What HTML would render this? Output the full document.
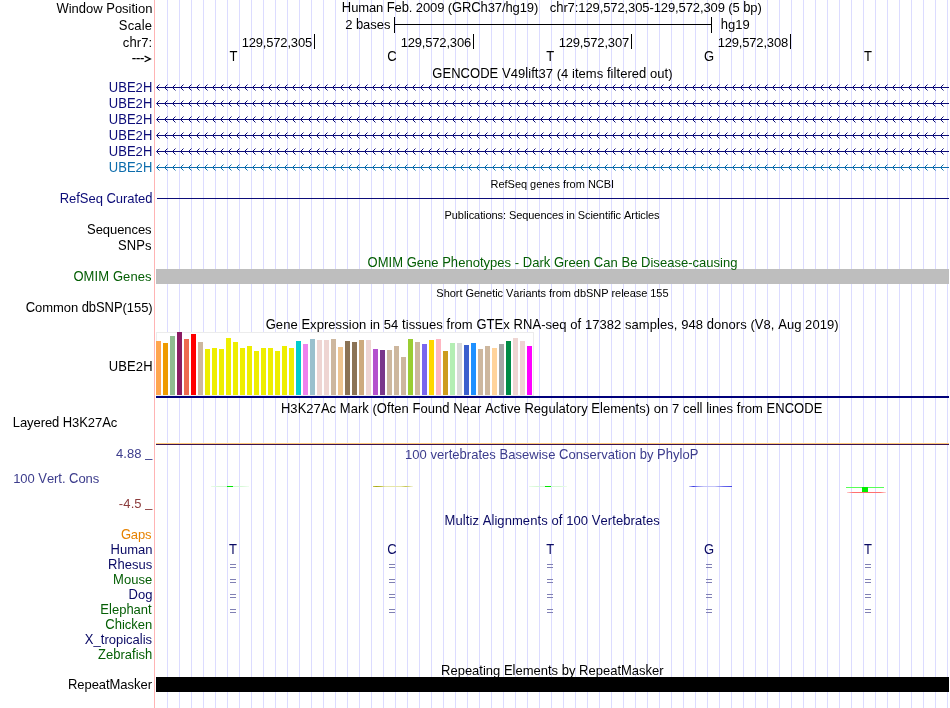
<!DOCTYPE html>
<html><head><meta charset="utf-8"><title>UCSC Genome Browser</title>
<style>
html,body{margin:0;padding:0;background:#fff}
body{width:950px;height:708px;overflow:hidden;position:relative;font-family:"Liberation Sans", sans-serif}
#g{position:absolute;left:0;top:0}
#t{position:absolute;left:0;top:0;width:950px;height:708px;will-change:transform}
#t span{position:absolute;white-space:pre}
#t b{display:inline-block;font-weight:normal;transform:scaleY(1.06);transform-origin:0 13px}
#t .s b{transform-origin:0 11.5px}
#bar{position:absolute;left:156px;top:677px;width:793px;height:15px;background:#000}
</style></head><body>
<svg id="g" width="950" height="708" viewBox="0 0 950 708">
<path d="M167.5 0V708M179.5 0V708M191.5 0V708M203.5 0V708M215.5 0V708M227.5 0V708M239.5 0V708M251.5 0V708M263.5 0V708M275.5 0V708M287.5 0V708M299.5 0V708M311.5 0V708M323.5 0V708M335.5 0V708M347.5 0V708M359.5 0V708M371.5 0V708M383.5 0V708M395.5 0V708M407.5 0V708M419.5 0V708M431.5 0V708M443.5 0V708M455.5 0V708M467.5 0V708M479.5 0V708M491.5 0V708M503.5 0V708M515.5 0V708M527.5 0V708M539.5 0V708M551.5 0V708M563.5 0V708M575.5 0V708M587.5 0V708M599.5 0V708M611.5 0V708M623.5 0V708M635.5 0V708M647.5 0V708M659.5 0V708M671.5 0V708M683.5 0V708M695.5 0V708M707.5 0V708M719.5 0V708M731.5 0V708M743.5 0V708M755.5 0V708M767.5 0V708M779.5 0V708M791.5 0V708M803.5 0V708M815.5 0V708M827.5 0V708M839.5 0V708M851.5 0V708M863.5 0V708M875.5 0V708M887.5 0V708M899.5 0V708M911.5 0V708M923.5 0V708M935.5 0V708M947.5 0V708" stroke="#dcdcff" stroke-width="1" fill="none"/>
<rect x="154" y="0" width="1" height="708" fill="#ffb4b4"/>
<rect x="394" y="24" width="318" height="1" fill="#000"/>
<rect x="394" y="17" width="1" height="16" fill="#000"/>
<rect x="711" y="17" width="1" height="16" fill="#000"/>
<path d="M132.3 58.5h3.4M136.4 58.5h3.4M140.5 58.5h3.3" stroke="#000" stroke-width="1.25"/><path d="M144.6 56.1L150.4 58.9L144.6 61.8" stroke="#000" stroke-width="1.25" fill="none"/>
<rect x="314" y="34" width="1" height="15" fill="#000"/>
<rect x="473" y="34" width="1" height="15" fill="#000"/>
<rect x="631" y="34" width="1" height="15" fill="#000"/>
<rect x="790" y="34" width="1" height="15" fill="#000"/>
<rect x="157" y="87" width="792" height="1" fill="#0c0c78"/>
<path d="M159.5 84.5L156.5 87.5L159.5 90.5M167.5 84.5L164.5 87.5L167.5 90.5M175.5 84.5L172.5 87.5L175.5 90.5M183.5 84.5L180.5 87.5L183.5 90.5M191.5 84.5L188.5 87.5L191.5 90.5M199.5 84.5L196.5 87.5L199.5 90.5M207.5 84.5L204.5 87.5L207.5 90.5M215.5 84.5L212.5 87.5L215.5 90.5M223.5 84.5L220.5 87.5L223.5 90.5M231.5 84.5L228.5 87.5L231.5 90.5M239.5 84.5L236.5 87.5L239.5 90.5M247.5 84.5L244.5 87.5L247.5 90.5M255.5 84.5L252.5 87.5L255.5 90.5M263.5 84.5L260.5 87.5L263.5 90.5M271.5 84.5L268.5 87.5L271.5 90.5M279.5 84.5L276.5 87.5L279.5 90.5M287.5 84.5L284.5 87.5L287.5 90.5M295.5 84.5L292.5 87.5L295.5 90.5M303.5 84.5L300.5 87.5L303.5 90.5M311.5 84.5L308.5 87.5L311.5 90.5M319.5 84.5L316.5 87.5L319.5 90.5M327.5 84.5L324.5 87.5L327.5 90.5M335.5 84.5L332.5 87.5L335.5 90.5M343.5 84.5L340.5 87.5L343.5 90.5M351.5 84.5L348.5 87.5L351.5 90.5M359.5 84.5L356.5 87.5L359.5 90.5M367.5 84.5L364.5 87.5L367.5 90.5M375.5 84.5L372.5 87.5L375.5 90.5M383.5 84.5L380.5 87.5L383.5 90.5M391.5 84.5L388.5 87.5L391.5 90.5M399.5 84.5L396.5 87.5L399.5 90.5M407.5 84.5L404.5 87.5L407.5 90.5M415.5 84.5L412.5 87.5L415.5 90.5M423.5 84.5L420.5 87.5L423.5 90.5M431.5 84.5L428.5 87.5L431.5 90.5M439.5 84.5L436.5 87.5L439.5 90.5M447.5 84.5L444.5 87.5L447.5 90.5M455.5 84.5L452.5 87.5L455.5 90.5M463.5 84.5L460.5 87.5L463.5 90.5M471.5 84.5L468.5 87.5L471.5 90.5M479.5 84.5L476.5 87.5L479.5 90.5M487.5 84.5L484.5 87.5L487.5 90.5M495.5 84.5L492.5 87.5L495.5 90.5M503.5 84.5L500.5 87.5L503.5 90.5M511.5 84.5L508.5 87.5L511.5 90.5M519.5 84.5L516.5 87.5L519.5 90.5M527.5 84.5L524.5 87.5L527.5 90.5M535.5 84.5L532.5 87.5L535.5 90.5M543.5 84.5L540.5 87.5L543.5 90.5M551.5 84.5L548.5 87.5L551.5 90.5M559.5 84.5L556.5 87.5L559.5 90.5M567.5 84.5L564.5 87.5L567.5 90.5M575.5 84.5L572.5 87.5L575.5 90.5M583.5 84.5L580.5 87.5L583.5 90.5M591.5 84.5L588.5 87.5L591.5 90.5M599.5 84.5L596.5 87.5L599.5 90.5M607.5 84.5L604.5 87.5L607.5 90.5M615.5 84.5L612.5 87.5L615.5 90.5M623.5 84.5L620.5 87.5L623.5 90.5M631.5 84.5L628.5 87.5L631.5 90.5M639.5 84.5L636.5 87.5L639.5 90.5M647.5 84.5L644.5 87.5L647.5 90.5M655.5 84.5L652.5 87.5L655.5 90.5M663.5 84.5L660.5 87.5L663.5 90.5M671.5 84.5L668.5 87.5L671.5 90.5M679.5 84.5L676.5 87.5L679.5 90.5M687.5 84.5L684.5 87.5L687.5 90.5M695.5 84.5L692.5 87.5L695.5 90.5M703.5 84.5L700.5 87.5L703.5 90.5M711.5 84.5L708.5 87.5L711.5 90.5M719.5 84.5L716.5 87.5L719.5 90.5M727.5 84.5L724.5 87.5L727.5 90.5M735.5 84.5L732.5 87.5L735.5 90.5M743.5 84.5L740.5 87.5L743.5 90.5M751.5 84.5L748.5 87.5L751.5 90.5M759.5 84.5L756.5 87.5L759.5 90.5M767.5 84.5L764.5 87.5L767.5 90.5M775.5 84.5L772.5 87.5L775.5 90.5M783.5 84.5L780.5 87.5L783.5 90.5M791.5 84.5L788.5 87.5L791.5 90.5M799.5 84.5L796.5 87.5L799.5 90.5M807.5 84.5L804.5 87.5L807.5 90.5M815.5 84.5L812.5 87.5L815.5 90.5M823.5 84.5L820.5 87.5L823.5 90.5M831.5 84.5L828.5 87.5L831.5 90.5M839.5 84.5L836.5 87.5L839.5 90.5M847.5 84.5L844.5 87.5L847.5 90.5M855.5 84.5L852.5 87.5L855.5 90.5M863.5 84.5L860.5 87.5L863.5 90.5M871.5 84.5L868.5 87.5L871.5 90.5M879.5 84.5L876.5 87.5L879.5 90.5M887.5 84.5L884.5 87.5L887.5 90.5M895.5 84.5L892.5 87.5L895.5 90.5M903.5 84.5L900.5 87.5L903.5 90.5M911.5 84.5L908.5 87.5L911.5 90.5M919.5 84.5L916.5 87.5L919.5 90.5M927.5 84.5L924.5 87.5L927.5 90.5M935.5 84.5L932.5 87.5L935.5 90.5M943.5 84.5L940.5 87.5L943.5 90.5" stroke="#0c0c78" stroke-width="1" fill="none"/>
<rect x="157" y="103" width="792" height="1" fill="#0c0c78"/>
<path d="M159.5 100.5L156.5 103.5L159.5 106.5M167.5 100.5L164.5 103.5L167.5 106.5M175.5 100.5L172.5 103.5L175.5 106.5M183.5 100.5L180.5 103.5L183.5 106.5M191.5 100.5L188.5 103.5L191.5 106.5M199.5 100.5L196.5 103.5L199.5 106.5M207.5 100.5L204.5 103.5L207.5 106.5M215.5 100.5L212.5 103.5L215.5 106.5M223.5 100.5L220.5 103.5L223.5 106.5M231.5 100.5L228.5 103.5L231.5 106.5M239.5 100.5L236.5 103.5L239.5 106.5M247.5 100.5L244.5 103.5L247.5 106.5M255.5 100.5L252.5 103.5L255.5 106.5M263.5 100.5L260.5 103.5L263.5 106.5M271.5 100.5L268.5 103.5L271.5 106.5M279.5 100.5L276.5 103.5L279.5 106.5M287.5 100.5L284.5 103.5L287.5 106.5M295.5 100.5L292.5 103.5L295.5 106.5M303.5 100.5L300.5 103.5L303.5 106.5M311.5 100.5L308.5 103.5L311.5 106.5M319.5 100.5L316.5 103.5L319.5 106.5M327.5 100.5L324.5 103.5L327.5 106.5M335.5 100.5L332.5 103.5L335.5 106.5M343.5 100.5L340.5 103.5L343.5 106.5M351.5 100.5L348.5 103.5L351.5 106.5M359.5 100.5L356.5 103.5L359.5 106.5M367.5 100.5L364.5 103.5L367.5 106.5M375.5 100.5L372.5 103.5L375.5 106.5M383.5 100.5L380.5 103.5L383.5 106.5M391.5 100.5L388.5 103.5L391.5 106.5M399.5 100.5L396.5 103.5L399.5 106.5M407.5 100.5L404.5 103.5L407.5 106.5M415.5 100.5L412.5 103.5L415.5 106.5M423.5 100.5L420.5 103.5L423.5 106.5M431.5 100.5L428.5 103.5L431.5 106.5M439.5 100.5L436.5 103.5L439.5 106.5M447.5 100.5L444.5 103.5L447.5 106.5M455.5 100.5L452.5 103.5L455.5 106.5M463.5 100.5L460.5 103.5L463.5 106.5M471.5 100.5L468.5 103.5L471.5 106.5M479.5 100.5L476.5 103.5L479.5 106.5M487.5 100.5L484.5 103.5L487.5 106.5M495.5 100.5L492.5 103.5L495.5 106.5M503.5 100.5L500.5 103.5L503.5 106.5M511.5 100.5L508.5 103.5L511.5 106.5M519.5 100.5L516.5 103.5L519.5 106.5M527.5 100.5L524.5 103.5L527.5 106.5M535.5 100.5L532.5 103.5L535.5 106.5M543.5 100.5L540.5 103.5L543.5 106.5M551.5 100.5L548.5 103.5L551.5 106.5M559.5 100.5L556.5 103.5L559.5 106.5M567.5 100.5L564.5 103.5L567.5 106.5M575.5 100.5L572.5 103.5L575.5 106.5M583.5 100.5L580.5 103.5L583.5 106.5M591.5 100.5L588.5 103.5L591.5 106.5M599.5 100.5L596.5 103.5L599.5 106.5M607.5 100.5L604.5 103.5L607.5 106.5M615.5 100.5L612.5 103.5L615.5 106.5M623.5 100.5L620.5 103.5L623.5 106.5M631.5 100.5L628.5 103.5L631.5 106.5M639.5 100.5L636.5 103.5L639.5 106.5M647.5 100.5L644.5 103.5L647.5 106.5M655.5 100.5L652.5 103.5L655.5 106.5M663.5 100.5L660.5 103.5L663.5 106.5M671.5 100.5L668.5 103.5L671.5 106.5M679.5 100.5L676.5 103.5L679.5 106.5M687.5 100.5L684.5 103.5L687.5 106.5M695.5 100.5L692.5 103.5L695.5 106.5M703.5 100.5L700.5 103.5L703.5 106.5M711.5 100.5L708.5 103.5L711.5 106.5M719.5 100.5L716.5 103.5L719.5 106.5M727.5 100.5L724.5 103.5L727.5 106.5M735.5 100.5L732.5 103.5L735.5 106.5M743.5 100.5L740.5 103.5L743.5 106.5M751.5 100.5L748.5 103.5L751.5 106.5M759.5 100.5L756.5 103.5L759.5 106.5M767.5 100.5L764.5 103.5L767.5 106.5M775.5 100.5L772.5 103.5L775.5 106.5M783.5 100.5L780.5 103.5L783.5 106.5M791.5 100.5L788.5 103.5L791.5 106.5M799.5 100.5L796.5 103.5L799.5 106.5M807.5 100.5L804.5 103.5L807.5 106.5M815.5 100.5L812.5 103.5L815.5 106.5M823.5 100.5L820.5 103.5L823.5 106.5M831.5 100.5L828.5 103.5L831.5 106.5M839.5 100.5L836.5 103.5L839.5 106.5M847.5 100.5L844.5 103.5L847.5 106.5M855.5 100.5L852.5 103.5L855.5 106.5M863.5 100.5L860.5 103.5L863.5 106.5M871.5 100.5L868.5 103.5L871.5 106.5M879.5 100.5L876.5 103.5L879.5 106.5M887.5 100.5L884.5 103.5L887.5 106.5M895.5 100.5L892.5 103.5L895.5 106.5M903.5 100.5L900.5 103.5L903.5 106.5M911.5 100.5L908.5 103.5L911.5 106.5M919.5 100.5L916.5 103.5L919.5 106.5M927.5 100.5L924.5 103.5L927.5 106.5M935.5 100.5L932.5 103.5L935.5 106.5M943.5 100.5L940.5 103.5L943.5 106.5" stroke="#0c0c78" stroke-width="1" fill="none"/>
<rect x="157" y="119" width="792" height="1" fill="#0c0c78"/>
<path d="M159.5 116.5L156.5 119.5L159.5 122.5M167.5 116.5L164.5 119.5L167.5 122.5M175.5 116.5L172.5 119.5L175.5 122.5M183.5 116.5L180.5 119.5L183.5 122.5M191.5 116.5L188.5 119.5L191.5 122.5M199.5 116.5L196.5 119.5L199.5 122.5M207.5 116.5L204.5 119.5L207.5 122.5M215.5 116.5L212.5 119.5L215.5 122.5M223.5 116.5L220.5 119.5L223.5 122.5M231.5 116.5L228.5 119.5L231.5 122.5M239.5 116.5L236.5 119.5L239.5 122.5M247.5 116.5L244.5 119.5L247.5 122.5M255.5 116.5L252.5 119.5L255.5 122.5M263.5 116.5L260.5 119.5L263.5 122.5M271.5 116.5L268.5 119.5L271.5 122.5M279.5 116.5L276.5 119.5L279.5 122.5M287.5 116.5L284.5 119.5L287.5 122.5M295.5 116.5L292.5 119.5L295.5 122.5M303.5 116.5L300.5 119.5L303.5 122.5M311.5 116.5L308.5 119.5L311.5 122.5M319.5 116.5L316.5 119.5L319.5 122.5M327.5 116.5L324.5 119.5L327.5 122.5M335.5 116.5L332.5 119.5L335.5 122.5M343.5 116.5L340.5 119.5L343.5 122.5M351.5 116.5L348.5 119.5L351.5 122.5M359.5 116.5L356.5 119.5L359.5 122.5M367.5 116.5L364.5 119.5L367.5 122.5M375.5 116.5L372.5 119.5L375.5 122.5M383.5 116.5L380.5 119.5L383.5 122.5M391.5 116.5L388.5 119.5L391.5 122.5M399.5 116.5L396.5 119.5L399.5 122.5M407.5 116.5L404.5 119.5L407.5 122.5M415.5 116.5L412.5 119.5L415.5 122.5M423.5 116.5L420.5 119.5L423.5 122.5M431.5 116.5L428.5 119.5L431.5 122.5M439.5 116.5L436.5 119.5L439.5 122.5M447.5 116.5L444.5 119.5L447.5 122.5M455.5 116.5L452.5 119.5L455.5 122.5M463.5 116.5L460.5 119.5L463.5 122.5M471.5 116.5L468.5 119.5L471.5 122.5M479.5 116.5L476.5 119.5L479.5 122.5M487.5 116.5L484.5 119.5L487.5 122.5M495.5 116.5L492.5 119.5L495.5 122.5M503.5 116.5L500.5 119.5L503.5 122.5M511.5 116.5L508.5 119.5L511.5 122.5M519.5 116.5L516.5 119.5L519.5 122.5M527.5 116.5L524.5 119.5L527.5 122.5M535.5 116.5L532.5 119.5L535.5 122.5M543.5 116.5L540.5 119.5L543.5 122.5M551.5 116.5L548.5 119.5L551.5 122.5M559.5 116.5L556.5 119.5L559.5 122.5M567.5 116.5L564.5 119.5L567.5 122.5M575.5 116.5L572.5 119.5L575.5 122.5M583.5 116.5L580.5 119.5L583.5 122.5M591.5 116.5L588.5 119.5L591.5 122.5M599.5 116.5L596.5 119.5L599.5 122.5M607.5 116.5L604.5 119.5L607.5 122.5M615.5 116.5L612.5 119.5L615.5 122.5M623.5 116.5L620.5 119.5L623.5 122.5M631.5 116.5L628.5 119.5L631.5 122.5M639.5 116.5L636.5 119.5L639.5 122.5M647.5 116.5L644.5 119.5L647.5 122.5M655.5 116.5L652.5 119.5L655.5 122.5M663.5 116.5L660.5 119.5L663.5 122.5M671.5 116.5L668.5 119.5L671.5 122.5M679.5 116.5L676.5 119.5L679.5 122.5M687.5 116.5L684.5 119.5L687.5 122.5M695.5 116.5L692.5 119.5L695.5 122.5M703.5 116.5L700.5 119.5L703.5 122.5M711.5 116.5L708.5 119.5L711.5 122.5M719.5 116.5L716.5 119.5L719.5 122.5M727.5 116.5L724.5 119.5L727.5 122.5M735.5 116.5L732.5 119.5L735.5 122.5M743.5 116.5L740.5 119.5L743.5 122.5M751.5 116.5L748.5 119.5L751.5 122.5M759.5 116.5L756.5 119.5L759.5 122.5M767.5 116.5L764.5 119.5L767.5 122.5M775.5 116.5L772.5 119.5L775.5 122.5M783.5 116.5L780.5 119.5L783.5 122.5M791.5 116.5L788.5 119.5L791.5 122.5M799.5 116.5L796.5 119.5L799.5 122.5M807.5 116.5L804.5 119.5L807.5 122.5M815.5 116.5L812.5 119.5L815.5 122.5M823.5 116.5L820.5 119.5L823.5 122.5M831.5 116.5L828.5 119.5L831.5 122.5M839.5 116.5L836.5 119.5L839.5 122.5M847.5 116.5L844.5 119.5L847.5 122.5M855.5 116.5L852.5 119.5L855.5 122.5M863.5 116.5L860.5 119.5L863.5 122.5M871.5 116.5L868.5 119.5L871.5 122.5M879.5 116.5L876.5 119.5L879.5 122.5M887.5 116.5L884.5 119.5L887.5 122.5M895.5 116.5L892.5 119.5L895.5 122.5M903.5 116.5L900.5 119.5L903.5 122.5M911.5 116.5L908.5 119.5L911.5 122.5M919.5 116.5L916.5 119.5L919.5 122.5M927.5 116.5L924.5 119.5L927.5 122.5M935.5 116.5L932.5 119.5L935.5 122.5M943.5 116.5L940.5 119.5L943.5 122.5" stroke="#0c0c78" stroke-width="1" fill="none"/>
<rect x="157" y="135" width="792" height="1" fill="#0c0c78"/>
<path d="M159.5 132.5L156.5 135.5L159.5 138.5M167.5 132.5L164.5 135.5L167.5 138.5M175.5 132.5L172.5 135.5L175.5 138.5M183.5 132.5L180.5 135.5L183.5 138.5M191.5 132.5L188.5 135.5L191.5 138.5M199.5 132.5L196.5 135.5L199.5 138.5M207.5 132.5L204.5 135.5L207.5 138.5M215.5 132.5L212.5 135.5L215.5 138.5M223.5 132.5L220.5 135.5L223.5 138.5M231.5 132.5L228.5 135.5L231.5 138.5M239.5 132.5L236.5 135.5L239.5 138.5M247.5 132.5L244.5 135.5L247.5 138.5M255.5 132.5L252.5 135.5L255.5 138.5M263.5 132.5L260.5 135.5L263.5 138.5M271.5 132.5L268.5 135.5L271.5 138.5M279.5 132.5L276.5 135.5L279.5 138.5M287.5 132.5L284.5 135.5L287.5 138.5M295.5 132.5L292.5 135.5L295.5 138.5M303.5 132.5L300.5 135.5L303.5 138.5M311.5 132.5L308.5 135.5L311.5 138.5M319.5 132.5L316.5 135.5L319.5 138.5M327.5 132.5L324.5 135.5L327.5 138.5M335.5 132.5L332.5 135.5L335.5 138.5M343.5 132.5L340.5 135.5L343.5 138.5M351.5 132.5L348.5 135.5L351.5 138.5M359.5 132.5L356.5 135.5L359.5 138.5M367.5 132.5L364.5 135.5L367.5 138.5M375.5 132.5L372.5 135.5L375.5 138.5M383.5 132.5L380.5 135.5L383.5 138.5M391.5 132.5L388.5 135.5L391.5 138.5M399.5 132.5L396.5 135.5L399.5 138.5M407.5 132.5L404.5 135.5L407.5 138.5M415.5 132.5L412.5 135.5L415.5 138.5M423.5 132.5L420.5 135.5L423.5 138.5M431.5 132.5L428.5 135.5L431.5 138.5M439.5 132.5L436.5 135.5L439.5 138.5M447.5 132.5L444.5 135.5L447.5 138.5M455.5 132.5L452.5 135.5L455.5 138.5M463.5 132.5L460.5 135.5L463.5 138.5M471.5 132.5L468.5 135.5L471.5 138.5M479.5 132.5L476.5 135.5L479.5 138.5M487.5 132.5L484.5 135.5L487.5 138.5M495.5 132.5L492.5 135.5L495.5 138.5M503.5 132.5L500.5 135.5L503.5 138.5M511.5 132.5L508.5 135.5L511.5 138.5M519.5 132.5L516.5 135.5L519.5 138.5M527.5 132.5L524.5 135.5L527.5 138.5M535.5 132.5L532.5 135.5L535.5 138.5M543.5 132.5L540.5 135.5L543.5 138.5M551.5 132.5L548.5 135.5L551.5 138.5M559.5 132.5L556.5 135.5L559.5 138.5M567.5 132.5L564.5 135.5L567.5 138.5M575.5 132.5L572.5 135.5L575.5 138.5M583.5 132.5L580.5 135.5L583.5 138.5M591.5 132.5L588.5 135.5L591.5 138.5M599.5 132.5L596.5 135.5L599.5 138.5M607.5 132.5L604.5 135.5L607.5 138.5M615.5 132.5L612.5 135.5L615.5 138.5M623.5 132.5L620.5 135.5L623.5 138.5M631.5 132.5L628.5 135.5L631.5 138.5M639.5 132.5L636.5 135.5L639.5 138.5M647.5 132.5L644.5 135.5L647.5 138.5M655.5 132.5L652.5 135.5L655.5 138.5M663.5 132.5L660.5 135.5L663.5 138.5M671.5 132.5L668.5 135.5L671.5 138.5M679.5 132.5L676.5 135.5L679.5 138.5M687.5 132.5L684.5 135.5L687.5 138.5M695.5 132.5L692.5 135.5L695.5 138.5M703.5 132.5L700.5 135.5L703.5 138.5M711.5 132.5L708.5 135.5L711.5 138.5M719.5 132.5L716.5 135.5L719.5 138.5M727.5 132.5L724.5 135.5L727.5 138.5M735.5 132.5L732.5 135.5L735.5 138.5M743.5 132.5L740.5 135.5L743.5 138.5M751.5 132.5L748.5 135.5L751.5 138.5M759.5 132.5L756.5 135.5L759.5 138.5M767.5 132.5L764.5 135.5L767.5 138.5M775.5 132.5L772.5 135.5L775.5 138.5M783.5 132.5L780.5 135.5L783.5 138.5M791.5 132.5L788.5 135.5L791.5 138.5M799.5 132.5L796.5 135.5L799.5 138.5M807.5 132.5L804.5 135.5L807.5 138.5M815.5 132.5L812.5 135.5L815.5 138.5M823.5 132.5L820.5 135.5L823.5 138.5M831.5 132.5L828.5 135.5L831.5 138.5M839.5 132.5L836.5 135.5L839.5 138.5M847.5 132.5L844.5 135.5L847.5 138.5M855.5 132.5L852.5 135.5L855.5 138.5M863.5 132.5L860.5 135.5L863.5 138.5M871.5 132.5L868.5 135.5L871.5 138.5M879.5 132.5L876.5 135.5L879.5 138.5M887.5 132.5L884.5 135.5L887.5 138.5M895.5 132.5L892.5 135.5L895.5 138.5M903.5 132.5L900.5 135.5L903.5 138.5M911.5 132.5L908.5 135.5L911.5 138.5M919.5 132.5L916.5 135.5L919.5 138.5M927.5 132.5L924.5 135.5L927.5 138.5M935.5 132.5L932.5 135.5L935.5 138.5M943.5 132.5L940.5 135.5L943.5 138.5" stroke="#0c0c78" stroke-width="1" fill="none"/>
<rect x="157" y="151" width="792" height="1" fill="#0c0c78"/>
<path d="M159.5 148.5L156.5 151.5L159.5 154.5M167.5 148.5L164.5 151.5L167.5 154.5M175.5 148.5L172.5 151.5L175.5 154.5M183.5 148.5L180.5 151.5L183.5 154.5M191.5 148.5L188.5 151.5L191.5 154.5M199.5 148.5L196.5 151.5L199.5 154.5M207.5 148.5L204.5 151.5L207.5 154.5M215.5 148.5L212.5 151.5L215.5 154.5M223.5 148.5L220.5 151.5L223.5 154.5M231.5 148.5L228.5 151.5L231.5 154.5M239.5 148.5L236.5 151.5L239.5 154.5M247.5 148.5L244.5 151.5L247.5 154.5M255.5 148.5L252.5 151.5L255.5 154.5M263.5 148.5L260.5 151.5L263.5 154.5M271.5 148.5L268.5 151.5L271.5 154.5M279.5 148.5L276.5 151.5L279.5 154.5M287.5 148.5L284.5 151.5L287.5 154.5M295.5 148.5L292.5 151.5L295.5 154.5M303.5 148.5L300.5 151.5L303.5 154.5M311.5 148.5L308.5 151.5L311.5 154.5M319.5 148.5L316.5 151.5L319.5 154.5M327.5 148.5L324.5 151.5L327.5 154.5M335.5 148.5L332.5 151.5L335.5 154.5M343.5 148.5L340.5 151.5L343.5 154.5M351.5 148.5L348.5 151.5L351.5 154.5M359.5 148.5L356.5 151.5L359.5 154.5M367.5 148.5L364.5 151.5L367.5 154.5M375.5 148.5L372.5 151.5L375.5 154.5M383.5 148.5L380.5 151.5L383.5 154.5M391.5 148.5L388.5 151.5L391.5 154.5M399.5 148.5L396.5 151.5L399.5 154.5M407.5 148.5L404.5 151.5L407.5 154.5M415.5 148.5L412.5 151.5L415.5 154.5M423.5 148.5L420.5 151.5L423.5 154.5M431.5 148.5L428.5 151.5L431.5 154.5M439.5 148.5L436.5 151.5L439.5 154.5M447.5 148.5L444.5 151.5L447.5 154.5M455.5 148.5L452.5 151.5L455.5 154.5M463.5 148.5L460.5 151.5L463.5 154.5M471.5 148.5L468.5 151.5L471.5 154.5M479.5 148.5L476.5 151.5L479.5 154.5M487.5 148.5L484.5 151.5L487.5 154.5M495.5 148.5L492.5 151.5L495.5 154.5M503.5 148.5L500.5 151.5L503.5 154.5M511.5 148.5L508.5 151.5L511.5 154.5M519.5 148.5L516.5 151.5L519.5 154.5M527.5 148.5L524.5 151.5L527.5 154.5M535.5 148.5L532.5 151.5L535.5 154.5M543.5 148.5L540.5 151.5L543.5 154.5M551.5 148.5L548.5 151.5L551.5 154.5M559.5 148.5L556.5 151.5L559.5 154.5M567.5 148.5L564.5 151.5L567.5 154.5M575.5 148.5L572.5 151.5L575.5 154.5M583.5 148.5L580.5 151.5L583.5 154.5M591.5 148.5L588.5 151.5L591.5 154.5M599.5 148.5L596.5 151.5L599.5 154.5M607.5 148.5L604.5 151.5L607.5 154.5M615.5 148.5L612.5 151.5L615.5 154.5M623.5 148.5L620.5 151.5L623.5 154.5M631.5 148.5L628.5 151.5L631.5 154.5M639.5 148.5L636.5 151.5L639.5 154.5M647.5 148.5L644.5 151.5L647.5 154.5M655.5 148.5L652.5 151.5L655.5 154.5M663.5 148.5L660.5 151.5L663.5 154.5M671.5 148.5L668.5 151.5L671.5 154.5M679.5 148.5L676.5 151.5L679.5 154.5M687.5 148.5L684.5 151.5L687.5 154.5M695.5 148.5L692.5 151.5L695.5 154.5M703.5 148.5L700.5 151.5L703.5 154.5M711.5 148.5L708.5 151.5L711.5 154.5M719.5 148.5L716.5 151.5L719.5 154.5M727.5 148.5L724.5 151.5L727.5 154.5M735.5 148.5L732.5 151.5L735.5 154.5M743.5 148.5L740.5 151.5L743.5 154.5M751.5 148.5L748.5 151.5L751.5 154.5M759.5 148.5L756.5 151.5L759.5 154.5M767.5 148.5L764.5 151.5L767.5 154.5M775.5 148.5L772.5 151.5L775.5 154.5M783.5 148.5L780.5 151.5L783.5 154.5M791.5 148.5L788.5 151.5L791.5 154.5M799.5 148.5L796.5 151.5L799.5 154.5M807.5 148.5L804.5 151.5L807.5 154.5M815.5 148.5L812.5 151.5L815.5 154.5M823.5 148.5L820.5 151.5L823.5 154.5M831.5 148.5L828.5 151.5L831.5 154.5M839.5 148.5L836.5 151.5L839.5 154.5M847.5 148.5L844.5 151.5L847.5 154.5M855.5 148.5L852.5 151.5L855.5 154.5M863.5 148.5L860.5 151.5L863.5 154.5M871.5 148.5L868.5 151.5L871.5 154.5M879.5 148.5L876.5 151.5L879.5 154.5M887.5 148.5L884.5 151.5L887.5 154.5M895.5 148.5L892.5 151.5L895.5 154.5M903.5 148.5L900.5 151.5L903.5 154.5M911.5 148.5L908.5 151.5L911.5 154.5M919.5 148.5L916.5 151.5L919.5 154.5M927.5 148.5L924.5 151.5L927.5 154.5M935.5 148.5L932.5 151.5L935.5 154.5M943.5 148.5L940.5 151.5L943.5 154.5" stroke="#0c0c78" stroke-width="1" fill="none"/>
<rect x="157" y="167" width="792" height="1" fill="#0c6cac"/>
<path d="M159.5 164.5L156.5 167.5L159.5 170.5M167.5 164.5L164.5 167.5L167.5 170.5M175.5 164.5L172.5 167.5L175.5 170.5M183.5 164.5L180.5 167.5L183.5 170.5M191.5 164.5L188.5 167.5L191.5 170.5M199.5 164.5L196.5 167.5L199.5 170.5M207.5 164.5L204.5 167.5L207.5 170.5M215.5 164.5L212.5 167.5L215.5 170.5M223.5 164.5L220.5 167.5L223.5 170.5M231.5 164.5L228.5 167.5L231.5 170.5M239.5 164.5L236.5 167.5L239.5 170.5M247.5 164.5L244.5 167.5L247.5 170.5M255.5 164.5L252.5 167.5L255.5 170.5M263.5 164.5L260.5 167.5L263.5 170.5M271.5 164.5L268.5 167.5L271.5 170.5M279.5 164.5L276.5 167.5L279.5 170.5M287.5 164.5L284.5 167.5L287.5 170.5M295.5 164.5L292.5 167.5L295.5 170.5M303.5 164.5L300.5 167.5L303.5 170.5M311.5 164.5L308.5 167.5L311.5 170.5M319.5 164.5L316.5 167.5L319.5 170.5M327.5 164.5L324.5 167.5L327.5 170.5M335.5 164.5L332.5 167.5L335.5 170.5M343.5 164.5L340.5 167.5L343.5 170.5M351.5 164.5L348.5 167.5L351.5 170.5M359.5 164.5L356.5 167.5L359.5 170.5M367.5 164.5L364.5 167.5L367.5 170.5M375.5 164.5L372.5 167.5L375.5 170.5M383.5 164.5L380.5 167.5L383.5 170.5M391.5 164.5L388.5 167.5L391.5 170.5M399.5 164.5L396.5 167.5L399.5 170.5M407.5 164.5L404.5 167.5L407.5 170.5M415.5 164.5L412.5 167.5L415.5 170.5M423.5 164.5L420.5 167.5L423.5 170.5M431.5 164.5L428.5 167.5L431.5 170.5M439.5 164.5L436.5 167.5L439.5 170.5M447.5 164.5L444.5 167.5L447.5 170.5M455.5 164.5L452.5 167.5L455.5 170.5M463.5 164.5L460.5 167.5L463.5 170.5M471.5 164.5L468.5 167.5L471.5 170.5M479.5 164.5L476.5 167.5L479.5 170.5M487.5 164.5L484.5 167.5L487.5 170.5M495.5 164.5L492.5 167.5L495.5 170.5M503.5 164.5L500.5 167.5L503.5 170.5M511.5 164.5L508.5 167.5L511.5 170.5M519.5 164.5L516.5 167.5L519.5 170.5M527.5 164.5L524.5 167.5L527.5 170.5M535.5 164.5L532.5 167.5L535.5 170.5M543.5 164.5L540.5 167.5L543.5 170.5M551.5 164.5L548.5 167.5L551.5 170.5M559.5 164.5L556.5 167.5L559.5 170.5M567.5 164.5L564.5 167.5L567.5 170.5M575.5 164.5L572.5 167.5L575.5 170.5M583.5 164.5L580.5 167.5L583.5 170.5M591.5 164.5L588.5 167.5L591.5 170.5M599.5 164.5L596.5 167.5L599.5 170.5M607.5 164.5L604.5 167.5L607.5 170.5M615.5 164.5L612.5 167.5L615.5 170.5M623.5 164.5L620.5 167.5L623.5 170.5M631.5 164.5L628.5 167.5L631.5 170.5M639.5 164.5L636.5 167.5L639.5 170.5M647.5 164.5L644.5 167.5L647.5 170.5M655.5 164.5L652.5 167.5L655.5 170.5M663.5 164.5L660.5 167.5L663.5 170.5M671.5 164.5L668.5 167.5L671.5 170.5M679.5 164.5L676.5 167.5L679.5 170.5M687.5 164.5L684.5 167.5L687.5 170.5M695.5 164.5L692.5 167.5L695.5 170.5M703.5 164.5L700.5 167.5L703.5 170.5M711.5 164.5L708.5 167.5L711.5 170.5M719.5 164.5L716.5 167.5L719.5 170.5M727.5 164.5L724.5 167.5L727.5 170.5M735.5 164.5L732.5 167.5L735.5 170.5M743.5 164.5L740.5 167.5L743.5 170.5M751.5 164.5L748.5 167.5L751.5 170.5M759.5 164.5L756.5 167.5L759.5 170.5M767.5 164.5L764.5 167.5L767.5 170.5M775.5 164.5L772.5 167.5L775.5 170.5M783.5 164.5L780.5 167.5L783.5 170.5M791.5 164.5L788.5 167.5L791.5 170.5M799.5 164.5L796.5 167.5L799.5 170.5M807.5 164.5L804.5 167.5L807.5 170.5M815.5 164.5L812.5 167.5L815.5 170.5M823.5 164.5L820.5 167.5L823.5 170.5M831.5 164.5L828.5 167.5L831.5 170.5M839.5 164.5L836.5 167.5L839.5 170.5M847.5 164.5L844.5 167.5L847.5 170.5M855.5 164.5L852.5 167.5L855.5 170.5M863.5 164.5L860.5 167.5L863.5 170.5M871.5 164.5L868.5 167.5L871.5 170.5M879.5 164.5L876.5 167.5L879.5 170.5M887.5 164.5L884.5 167.5L887.5 170.5M895.5 164.5L892.5 167.5L895.5 170.5M903.5 164.5L900.5 167.5L903.5 170.5M911.5 164.5L908.5 167.5L911.5 170.5M919.5 164.5L916.5 167.5L919.5 170.5M927.5 164.5L924.5 167.5L927.5 170.5M935.5 164.5L932.5 167.5L935.5 170.5M943.5 164.5L940.5 167.5L943.5 170.5" stroke="#0c6cac" stroke-width="1" fill="none"/>
<rect x="157" y="198" width="792" height="1" fill="#0c0c78"/>
<rect x="156" y="269" width="793" height="15" fill="#bebebe"/>
<rect x="156.5" y="332.5" width="377" height="63" fill="#fff" stroke="#ececec" stroke-width="1"/>
<rect x="156" y="341" width="5" height="54" fill="#FFA54F"/>
<rect x="163" y="343" width="5" height="52" fill="#EE9A00"/>
<rect x="170" y="336" width="5" height="59" fill="#8FBC8F"/>
<rect x="177" y="332" width="5" height="63" fill="#8B1C62"/>
<rect x="184" y="339" width="5" height="56" fill="#EE6A50"/>
<rect x="191" y="334" width="5" height="61" fill="#FF0000"/>
<rect x="198" y="342" width="5" height="53" fill="#CDB79E"/>
<rect x="205" y="349" width="5" height="46" fill="#EEEE00"/>
<rect x="212" y="348" width="5" height="47" fill="#EEEE00"/>
<rect x="219" y="349" width="5" height="46" fill="#EEEE00"/>
<rect x="226" y="338" width="5" height="57" fill="#EEEE00"/>
<rect x="233" y="342" width="5" height="53" fill="#EEEE00"/>
<rect x="240" y="348" width="5" height="47" fill="#EEEE00"/>
<rect x="247" y="346" width="5" height="49" fill="#EEEE00"/>
<rect x="254" y="351" width="5" height="44" fill="#EEEE00"/>
<rect x="261" y="348" width="5" height="47" fill="#EEEE00"/>
<rect x="268" y="348" width="5" height="47" fill="#EEEE00"/>
<rect x="275" y="351" width="5" height="44" fill="#EEEE00"/>
<rect x="282" y="346" width="5" height="49" fill="#EEEE00"/>
<rect x="289" y="348" width="5" height="47" fill="#EEEE00"/>
<rect x="296" y="341" width="5" height="54" fill="#00CDCD"/>
<rect x="303" y="344" width="5" height="51" fill="#EE82EE"/>
<rect x="310" y="339" width="5" height="56" fill="#9AC0CD"/>
<rect x="317" y="340" width="5" height="55" fill="#EED5D2"/>
<rect x="324" y="340" width="5" height="55" fill="#EED5D2"/>
<rect x="331" y="339" width="5" height="56" fill="#CDB79E"/>
<rect x="338" y="347" width="5" height="48" fill="#EEC591"/>
<rect x="345" y="341" width="5" height="54" fill="#8B7355"/>
<rect x="352" y="342" width="5" height="53" fill="#8B7355"/>
<rect x="359" y="340" width="5" height="55" fill="#CDAA7D"/>
<rect x="366" y="340" width="5" height="55" fill="#EED5D2"/>
<rect x="373" y="349" width="5" height="46" fill="#B452CD"/>
<rect x="380" y="350" width="5" height="45" fill="#7A378B"/>
<rect x="387" y="350" width="5" height="45" fill="#CDB79E"/>
<rect x="394" y="346" width="5" height="49" fill="#CDB79E"/>
<rect x="401" y="357" width="5" height="38" fill="#CDB79E"/>
<rect x="408" y="339" width="5" height="56" fill="#9ACD32"/>
<rect x="415" y="342" width="5" height="53" fill="#CDB79E"/>
<rect x="422" y="344" width="5" height="51" fill="#7A67EE"/>
<rect x="429" y="340" width="5" height="55" fill="#FFD700"/>
<rect x="436" y="339" width="5" height="56" fill="#FFB6C1"/>
<rect x="443" y="351" width="5" height="44" fill="#CD9B1D"/>
<rect x="450" y="343" width="5" height="52" fill="#B4EEB4"/>
<rect x="457" y="343" width="5" height="52" fill="#D9D9D9"/>
<rect x="464" y="345" width="5" height="50" fill="#3A5FCD"/>
<rect x="471" y="343" width="5" height="52" fill="#1E90FF"/>
<rect x="478" y="349" width="5" height="46" fill="#CDB79E"/>
<rect x="485" y="346" width="5" height="49" fill="#CDB79E"/>
<rect x="492" y="348" width="5" height="47" fill="#FFD39B"/>
<rect x="499" y="344" width="5" height="51" fill="#A6A6A6"/>
<rect x="506" y="341" width="5" height="54" fill="#008B45"/>
<rect x="513" y="338" width="5" height="57" fill="#EED5D2"/>
<rect x="520" y="341" width="5" height="54" fill="#EED5D2"/>
<rect x="527" y="346" width="5" height="49" fill="#FF00FF"/>
<rect x="156" y="396" width="793" height="2" fill="#00007a"/>
<rect x="156" y="443" width="793" height="1" fill="#ffc878"/>
<rect x="156" y="444" width="793" height="1" fill="#3c1450"/>
<defs><linearGradient id="ga"><stop offset="0" stop-color="#eafcea"/><stop offset=".2" stop-color="#d4f8d4"/><stop offset=".8" stop-color="#d4f8d4"/><stop offset="1" stop-color="#f0fdf0"/></linearGradient><linearGradient id="gb"><stop offset="0" stop-color="#c8c850"/><stop offset=".08" stop-color="#a8a818"/><stop offset=".2" stop-color="#c0c040"/><stop offset=".3" stop-color="#e6e6a8"/><stop offset=".7" stop-color="#e6e6a8"/><stop offset=".82" stop-color="#c4c450"/><stop offset=".9" stop-color="#d8d888"/><stop offset="1" stop-color="#f6f6e0"/></linearGradient><linearGradient id="gc"><stop offset="0" stop-color="#c8c8f8"/><stop offset=".1" stop-color="#3c3ce0"/><stop offset=".2" stop-color="#8c8cf0"/><stop offset=".35" stop-color="#c4c4f8"/><stop offset=".6" stop-color="#c4c4f8"/><stop offset=".8" stop-color="#6c6cec"/><stop offset="1" stop-color="#4444e4"/></linearGradient><linearGradient id="gd"><stop offset="0" stop-color="#ffd0d0"/><stop offset=".15" stop-color="#ff7070"/><stop offset=".85" stop-color="#ff7070"/><stop offset="1" stop-color="#ffd8d8"/></linearGradient></defs>
<rect x="211" y="486" width="38" height="1" fill="url(#ga)"/><rect x="227" y="486" width="6" height="1" fill="#00e800"/>
<rect x="373" y="486" width="40" height="1" fill="url(#gb)"/>
<rect x="529" y="486" width="38" height="1" fill="url(#ga)"/><rect x="545" y="486" width="6" height="1" fill="#00e800"/>
<rect x="689" y="486" width="43" height="1" fill="url(#gc)"/>
<rect x="846" y="487" width="38" height="1" fill="#58ff58"/><rect x="847" y="492" width="39" height="1" fill="url(#gd)"/><rect x="862" y="487" width="6" height="5" fill="#00ee00"/>
<rect x="145" y="459" width="7.5" height="1" fill="#3c3c8c" opacity=".9"/><rect x="145" y="509" width="7.5" height="1" fill="#8c3c3c" opacity=".9"/>
<rect x="230" y="564" width="6" height="1" fill="#8080b4"/><rect x="230" y="567" width="6" height="1" fill="#8080b4"/>
<rect x="230" y="579" width="6" height="1" fill="#8080b4"/><rect x="230" y="582" width="6" height="1" fill="#8080b4"/>
<rect x="230" y="594" width="6" height="1" fill="#8080b4"/><rect x="230" y="597" width="6" height="1" fill="#8080b4"/>
<rect x="230" y="609" width="6" height="1" fill="#8080b4"/><rect x="230" y="612" width="6" height="1" fill="#8080b4"/>
<rect x="389" y="564" width="6" height="1" fill="#8080b4"/><rect x="389" y="567" width="6" height="1" fill="#8080b4"/>
<rect x="389" y="579" width="6" height="1" fill="#8080b4"/><rect x="389" y="582" width="6" height="1" fill="#8080b4"/>
<rect x="389" y="594" width="6" height="1" fill="#8080b4"/><rect x="389" y="597" width="6" height="1" fill="#8080b4"/>
<rect x="389" y="609" width="6" height="1" fill="#8080b4"/><rect x="389" y="612" width="6" height="1" fill="#8080b4"/>
<rect x="547" y="564" width="6" height="1" fill="#8080b4"/><rect x="547" y="567" width="6" height="1" fill="#8080b4"/>
<rect x="547" y="579" width="6" height="1" fill="#8080b4"/><rect x="547" y="582" width="6" height="1" fill="#8080b4"/>
<rect x="547" y="594" width="6" height="1" fill="#8080b4"/><rect x="547" y="597" width="6" height="1" fill="#8080b4"/>
<rect x="547" y="609" width="6" height="1" fill="#8080b4"/><rect x="547" y="612" width="6" height="1" fill="#8080b4"/>
<rect x="706" y="564" width="6" height="1" fill="#8080b4"/><rect x="706" y="567" width="6" height="1" fill="#8080b4"/>
<rect x="706" y="579" width="6" height="1" fill="#8080b4"/><rect x="706" y="582" width="6" height="1" fill="#8080b4"/>
<rect x="706" y="594" width="6" height="1" fill="#8080b4"/><rect x="706" y="597" width="6" height="1" fill="#8080b4"/>
<rect x="706" y="609" width="6" height="1" fill="#8080b4"/><rect x="706" y="612" width="6" height="1" fill="#8080b4"/>
<rect x="865" y="564" width="6" height="1" fill="#8080b4"/><rect x="865" y="567" width="6" height="1" fill="#8080b4"/>
<rect x="865" y="579" width="6" height="1" fill="#8080b4"/><rect x="865" y="582" width="6" height="1" fill="#8080b4"/>
<rect x="865" y="594" width="6" height="1" fill="#8080b4"/><rect x="865" y="597" width="6" height="1" fill="#8080b4"/>
<rect x="865" y="609" width="6" height="1" fill="#8080b4"/><rect x="865" y="612" width="6" height="1" fill="#8080b4"/>
</svg>
<div id="t">
<span style="left:56.40px;top:-0.00px;font-size:13px;line-height:17px;color:#000;letter-spacing:-0.007px"><b>W</b>in<b>d</b>ow <b>P</b>osi<b>t</b>ion</span>
<span style="left:118.80px;top:17.00px;font-size:13px;line-height:17px;color:#000;letter-spacing:0.188px"><b>S</b>ca<b>l</b>e</span>
<span style="left:122.75px;top:34.00px;font-size:13px;line-height:17px;color:#000;letter-spacing:0.112px">c<b>h</b>r7:</span>
<span style="left:108.75px;top:79.00px;font-size:13px;line-height:17px;color:#0c0c78;letter-spacing:0.038px"><b>UBE</b>2<b>H</b></span>
<span style="left:108.75px;top:95.00px;font-size:13px;line-height:17px;color:#0c0c78;letter-spacing:0.038px"><b>UBE</b>2<b>H</b></span>
<span style="left:108.75px;top:111.00px;font-size:13px;line-height:17px;color:#0c0c78;letter-spacing:0.038px"><b>UBE</b>2<b>H</b></span>
<span style="left:108.75px;top:127.00px;font-size:13px;line-height:17px;color:#0c0c78;letter-spacing:0.038px"><b>UBE</b>2<b>H</b></span>
<span style="left:108.75px;top:143.00px;font-size:13px;line-height:17px;color:#0c0c78;letter-spacing:0.038px"><b>UBE</b>2<b>H</b></span>
<span style="left:108.75px;top:159.00px;font-size:13px;line-height:17px;color:#0c6cac;letter-spacing:0.038px"><b>UBE</b>2<b>H</b></span>
<span style="left:59.65px;top:190.00px;font-size:13px;line-height:17px;color:#0c0c78;letter-spacing:-0.031px"><b>R</b>e<b>fS</b>eq <b>C</b>ura<b>t</b>e<b>d</b></span>
<span style="left:87.00px;top:221.00px;font-size:13px;line-height:17px;color:#000;letter-spacing:-0.056px"><b>S</b>equences</span>
<span style="left:117.90px;top:237.00px;font-size:13px;line-height:17px;color:#000;letter-spacing:0.117px"><b>SNP</b>s</span>
<span style="left:73.40px;top:268.00px;font-size:13px;line-height:17px;color:#045e04;letter-spacing:0.094px"><b>OMIM</b> <b>G</b>enes</span>
<span style="left:25.70px;top:299.00px;font-size:13px;line-height:17px;color:#000;letter-spacing:-0.059px"><b>C</b>ommon <b>dbSNP</b>(155)</span>
<span style="left:108.85px;top:358.00px;font-size:13px;line-height:17px;color:#000;letter-spacing:0.087px"><b>UBE</b>2<b>H</b></span>
<span style="left:12.75px;top:414.00px;font-size:13px;line-height:17px;color:#000;letter-spacing:-0.075px"><b>L</b>ayere<b>d</b> <b>H</b>3<b>K</b>27<b>A</b>c</span>
<span style="left:116.00px;top:445.00px;font-size:13px;line-height:17px;color:#3c3c8c;letter-spacing:0.067px">4.88</span>
<span style="left:13.15px;top:470.00px;font-size:13px;line-height:17px;color:#3c3c8c;letter-spacing:-0.050px">100 <b>V</b>er<b>t</b>. <b>C</b>ons</span>
<span style="left:118.85px;top:495.00px;font-size:13px;line-height:17px;color:#8c3c3c;letter-spacing:0.117px">-4.5</span>
<span style="left:120.90px;top:526.00px;font-size:13px;line-height:17px;color:#e68200;letter-spacing:-0.150px"><b>G</b>aps</span>
<span style="left:110.60px;top:541.00px;font-size:13px;line-height:17px;color:#0a0a64"><b>H</b>uman</span>
<span style="left:108.10px;top:556.00px;font-size:13px;line-height:17px;color:#0a0a64"><b>Rh</b>esus</span>
<span style="left:113.10px;top:571.00px;font-size:13px;line-height:17px;color:#045e04"><b>M</b>ouse</span>
<span style="left:128.60px;top:586.00px;font-size:13px;line-height:17px;color:#0a0a64"><b>D</b>og</span>
<span style="left:100.35px;top:601.00px;font-size:13px;line-height:17px;color:#045e04"><b>El</b>ep<b>h</b>an<b>t</b></span>
<span style="left:105.35px;top:616.00px;font-size:13px;line-height:17px;color:#045e04"><b>Ch</b>ic<b>k</b>en</span>
<span style="left:84.85px;top:631.00px;font-size:13px;line-height:17px;color:#0a0a64"><b>X</b>_<b>t</b>ropica<b>l</b>is</span>
<span style="left:98.10px;top:646.00px;font-size:13px;line-height:17px;color:#045e04"><b>Z</b>e<b>b</b>ra<b>f</b>is<b>h</b></span>
<span style="left:67.95px;top:676.00px;font-size:13px;line-height:17px;color:#000;letter-spacing:-0.050px"><b>R</b>epea<b>tM</b>as<b>k</b>er</span>
<span style="left:341.85px;top:-1.00px;font-size:13px;line-height:17px;color:#000;letter-spacing:-0.112px"><b>H</b>uman <b>F</b>e<b>b</b>. 2009 (<b>GRCh</b>37/<b>h</b>g19)</span>
<span style="left:549.85px;top:-1.00px;font-size:13px;line-height:17px;color:#000;letter-spacing:-0.103px">c<b>h</b>r7:129,572,305-129,572,309 (5 <b>b</b>p)</span>
<span style="left:345.20px;top:16.00px;font-size:13px;line-height:17px;color:#000;letter-spacing:-0.058px">2 <b>b</b>ases</span>
<span style="left:720.65px;top:16.00px;font-size:13px;line-height:17px;color:#000;letter-spacing:0.083px"><b>h</b>g19</span>
<span style="left:241.65px;top:34.00px;font-size:13px;line-height:17px;color:#000;letter-spacing:-0.175px">129,572,305</span>
<span style="left:400.65px;top:34.00px;font-size:13px;line-height:17px;color:#000;letter-spacing:-0.175px">129,572,306</span>
<span style="left:558.65px;top:34.00px;font-size:13px;line-height:17px;color:#000;letter-spacing:-0.175px">129,572,307</span>
<span style="left:717.65px;top:34.00px;font-size:13px;line-height:17px;color:#000;letter-spacing:-0.175px">129,572,308</span>
<span style="left:229.40px;top:48.00px;font-size:13px;line-height:17px;color:#000"><b>T</b></span>
<span style="left:387.25px;top:48.00px;font-size:13px;line-height:17px;color:#000"><b>C</b></span>
<span style="left:546.30px;top:48.00px;font-size:13px;line-height:17px;color:#000"><b>T</b></span>
<span style="left:704.00px;top:48.00px;font-size:13px;line-height:17px;color:#000"><b>G</b></span>
<span style="left:864.00px;top:48.00px;font-size:13px;line-height:17px;color:#000"><b>T</b></span>
<span style="left:432.30px;top:65.00px;font-size:13px;line-height:17px;color:#000;letter-spacing:0.044px"><b>GENCODE</b> <b>V</b>49<b>l</b>i<b>ft</b>37 (4 i<b>t</b>ems <b>f</b>i<b>lt</b>ere<b>d</b> ou<b>t</b>)</span>
<span class="s" style="left:490.55px;top:176.69px;font-size:11px;line-height:15px;color:#000;letter-spacing:-0.031px"><b>R</b>e<b>fS</b>eq genes <b>f</b>rom <b>NCBI</b></span>
<span class="s" style="left:444.55px;top:207.69px;font-size:11px;line-height:15px;color:#000;letter-spacing:-0.073px"><b>P</b>u<b>bl</b>ica<b>t</b>ions: <b>S</b>equences in <b>S</b>cien<b>t</b>i<b>f</b>ic <b>A</b>r<b>t</b>ic<b>l</b>es</span>
<span style="left:367.50px;top:253.50px;font-size:13px;line-height:17px;color:#045e04;letter-spacing:0.025px"><b>OMIM</b> <b>G</b>ene <b>Ph</b>eno<b>t</b>ypes - <b>D</b>ar<b>k</b> <b>G</b>reen <b>C</b>an <b>B</b>e <b>D</b>isease-causing</span>
<span class="s" style="left:436.35px;top:285.69px;font-size:11px;line-height:15px;color:#000;letter-spacing:-0.049px"><b>Sh</b>or<b>t</b> <b>G</b>ene<b>t</b>ic <b>V</b>arian<b>t</b>s <b>f</b>rom <b>dbSNP</b> re<b>l</b>ease 155</span>
<span style="left:265.70px;top:315.50px;font-size:13px;line-height:17px;color:#000;letter-spacing:0.053px"><b>G</b>ene <b>E</b>xpression in 54 <b>t</b>issues <b>f</b>rom <b>GTE</b>x <b>RNA</b>-seq o<b>f</b> 17382 samp<b>l</b>es, 948 <b>d</b>onors (<b>V</b>8, <b>A</b>ug 2019)</span>
<span style="left:280.95px;top:400.00px;font-size:13px;line-height:17px;color:#000;letter-spacing:0.033px"><b>H</b>3<b>K</b>27<b>A</b>c <b>M</b>ar<b>k</b> (<b>Oft</b>en <b>F</b>oun<b>d</b> <b>N</b>ear <b>A</b>c<b>t</b>ive <b>R</b>egu<b>l</b>a<b>t</b>ory <b>El</b>emen<b>t</b>s) on 7 ce<b>ll</b> <b>l</b>ines <b>f</b>rom <b>ENCODE</b></span>
<span style="left:405.05px;top:445.50px;font-size:13px;line-height:17px;color:#3c3c8c;letter-spacing:0.029px">100 ver<b>t</b>e<b>b</b>ra<b>t</b>es <b>B</b>asewise <b>C</b>onserva<b>t</b>ion <b>b</b>y <b>Ph</b>y<b>l</b>o<b>P</b></span>
<span style="left:444.55px;top:511.50px;font-size:13px;line-height:17px;color:#0a0a64;letter-spacing:0.077px"><b>M</b>u<b>lt</b>iz <b>Al</b>ignmen<b>t</b>s o<b>f</b> 100 <b>V</b>er<b>t</b>e<b>b</b>ra<b>t</b>es</span>
<span style="left:441.05px;top:661.50px;font-size:13px;line-height:17px;color:#000;letter-spacing:-0.003px"><b>R</b>epea<b>t</b>ing <b>El</b>emen<b>t</b>s <b>b</b>y <b>R</b>epea<b>tM</b>as<b>k</b>er</span>
<span style="left:229.00px;top:541.00px;font-size:13px;line-height:17px;color:#0a0a64"><b>T</b></span>
<span style="left:387.25px;top:541.00px;font-size:13px;line-height:17px;color:#0a0a64"><b>C</b></span>
<span style="left:546.30px;top:541.00px;font-size:13px;line-height:17px;color:#0a0a64"><b>T</b></span>
<span style="left:704.00px;top:541.00px;font-size:13px;line-height:17px;color:#0a0a64"><b>G</b></span>
<span style="left:864.00px;top:541.00px;font-size:13px;line-height:17px;color:#0a0a64"><b>T</b></span>
</div>
<div id="bar"></div>
</body></html>
